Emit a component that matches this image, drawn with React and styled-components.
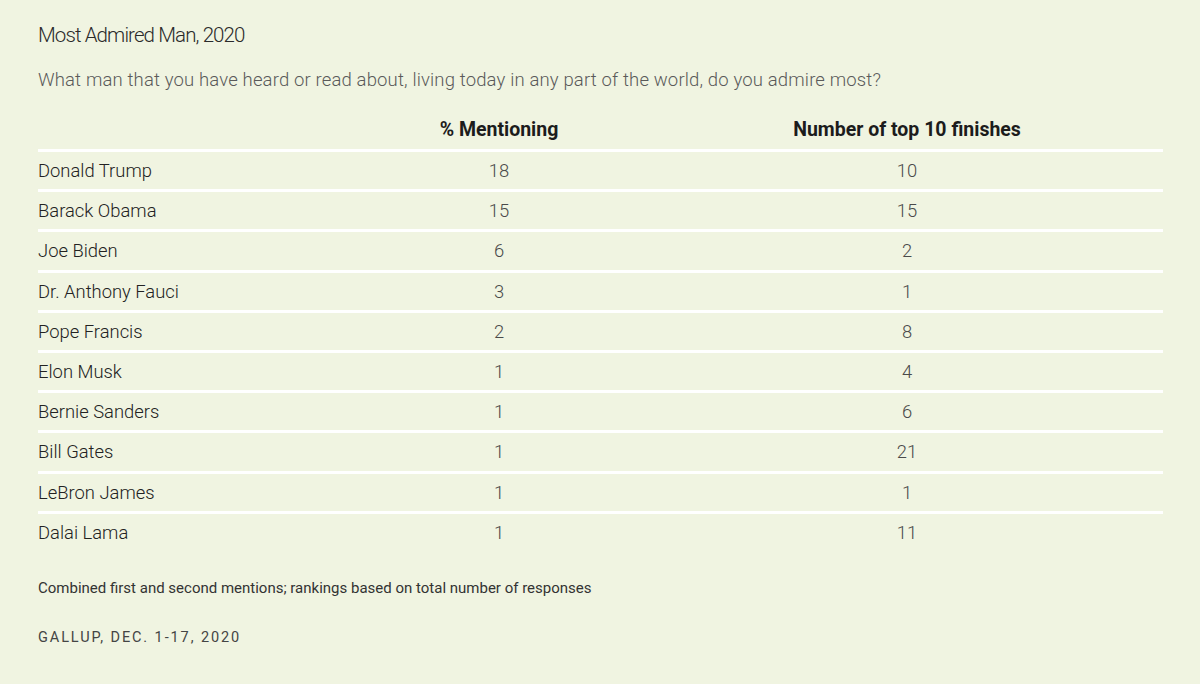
import React from "react";
import styled, { createGlobalStyle } from "styled-components";

const rows = [
  ["Donald Trump", 18, 10],
  ["Barack Obama", 15, 15],
  ["Joe Biden", 6, 2],
  ["Dr. Anthony Fauci", 3, 1],
  ["Pope Francis", 2, 8],
  ["Elon Musk", 1, 4],
  ["Bernie Sanders", 1, 6],
  ["Bill Gates", 1, 21],
  ["LeBron James", 1, 1],
  ["Dalai Lama", 1, 11],
];

function App() {
  return (
    <>
      <GlobalStyle />
      <Page>
        <Title>Most Admired Man, 2020</Title>
        <Question>
          What man that you have heard or read about, living today in any part
          of the world, do you admire most?
        </Question>

        <Table>
          <HeadRow>
            <Cell />
            <HeadCell>% Mentioning</HeadCell>
            <HeadCell>Number of top 10 finishes</HeadCell>
            <Cell />
          </HeadRow>
          {rows.map(([name, pct, top]) => (
            <Row key={name}>
              <NameCell>{name}</NameCell>
              <Cell>{pct}</Cell>
              <Cell>{top}</Cell>
              <Cell />
            </Row>
          ))}
        </Table>

        <Note>
          Combined first and second mentions; rankings based on total number of
          responses
        </Note>
        <Source>Gallup, Dec. 1-17, 2020</Source>
      </Page>
    </>
  );
}

export default App;

const GlobalStyle = createGlobalStyle`
  html, body {
    margin: 0;
    background: #f0f4e1;
  }
  body {
    font-family: Roboto, "Liberation Sans", sans-serif;
    color: #2b2b2b;
  }
`;

const Page = styled.div`
  width: 1163px;
  padding: 21px 0 0 38px;
  min-height: 684px;
  box-sizing: border-box;
`;

const Title = styled.h1`
  margin: 0;
  font-size: 20.5px;
  font-weight: 300;
  line-height: 28px;
  letter-spacing: -0.9px;
  color: #2a2a2a;
`;

const Question = styled.p`
  margin: 19px 0 0;
  font-size: 18.5px;
  font-weight: 300;
  line-height: 24px;
  letter-spacing: 0.15px;
  color: #5a5a5a;
`;

const Table = styled.div`
  margin-top: 17px;
  display: flex;
  flex-direction: column;
`;

const grid = `
  display: grid;
  grid-template-columns: 257px 408px 408px 1fr;
  align-items: center;
`;

const HeadRow = styled.div`
  ${grid}
  height: 40px;
`;

const Row = styled.div`
  ${grid}
  height: 40.2px;
  box-sizing: border-box;
  border-top: 3px solid #ffffff;
`;

const Cell = styled.div`
  text-align: center;
  font-size: 18.4px;
  font-weight: 300;
  color: #4a4a4a;
`;

const NameCell = styled(Cell)`
  text-align: left;
  color: #222;
`;

const HeadCell = styled(Cell)`
  font-size: 19.5px;
  font-weight: 700;
  color: #1c1c1c;
`;

const Note = styled.p`
  margin: 27px 0 0;
  font-size: 15px;
  font-weight: 400;
  line-height: 20px;
  color: #333;
`;

const Source = styled.p`
  margin: 30px 0 0;
  font-size: 14.5px;
  line-height: 20px;
  text-transform: uppercase;
  letter-spacing: 1.9px;
  color: #444;
`;
